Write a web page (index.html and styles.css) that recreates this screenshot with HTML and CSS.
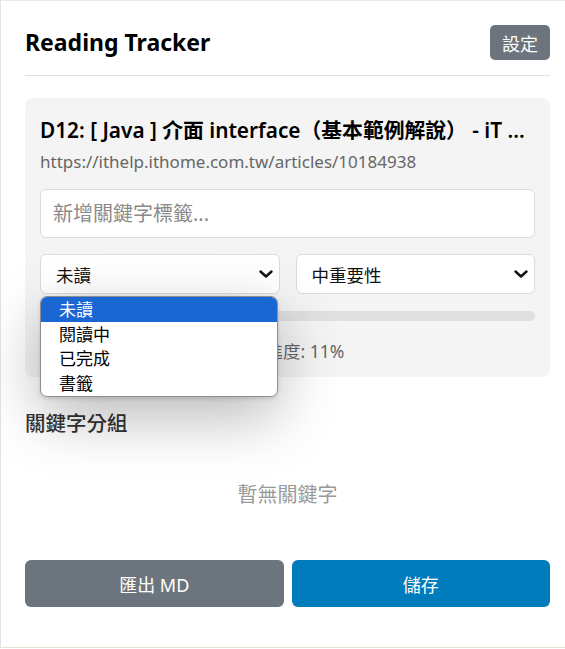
FILE: index.html
```html
<!DOCTYPE html>
<html lang="zh-Hant">
<head>
<meta charset="utf-8">
<title>Reading Tracker</title>
<link rel="stylesheet" href="styles.css">
</head>
<body>
<div class="app">
  <header class="header">
    <h1 class="app-title">Reading Tracker</h1>
    <button class="btn-settings">設定</button>
  </header>

  <section class="card">
    <div class="article-title">D12: [ Java ] 介面 interface（基本範例解說） - iT ...</div>
    <div class="article-url">https://ithelp.ithome.com.tw/articles/10184938</div>
    <input class="tag-input" type="text" placeholder="新增關鍵字標籤...">
    <div class="select-row">
      <div class="select-wrap">
        <div class="select">
          <span>未讀</span>
          <svg class="chev" width="14" height="8" viewBox="0 0 14 8"><path d="M1.5 1.5 L7 6.5 L12.5 1.5" fill="none" stroke="#111" stroke-width="2.4" stroke-linecap="round" stroke-linejoin="round"/></svg>
        </div>
        <ul class="listbox">
          <li class="option selected">未讀</li>
          <li class="option">閱讀中</li>
          <li class="option">已完成</li>
          <li class="option">書籤</li>
        </ul>
      </div>
      <div class="select">
        <span>中重要性</span>
        <svg class="chev" width="14" height="8" viewBox="0 0 14 8"><path d="M1.5 1.5 L7 6.5 L12.5 1.5" fill="none" stroke="#111" stroke-width="2.4" stroke-linecap="round" stroke-linejoin="round"/></svg>
      </div>
    </div>
    <div class="progress"><div class="progress-fill" style="width:11%"></div></div>
    <div class="progress-text">閱讀進度: 11%</div>
  </section>

  <h2 class="section-title">關鍵字分組</h2>
  <div class="empty">暫無關鍵字</div>

  <div class="actions">
    <button class="btn btn-gray">匯出 MD</button>
    <button class="btn btn-blue">儲存</button>
  </div>
</div>
</body>
</html>
```
FILE: styles.css
```css
* { box-sizing: border-box; }
html, body { margin: 0; padding: 0; background: #fff; }
body {
  font-family: "Noto Sans", "Noto Sans CJK TC", sans-serif;
  color: #111;
}
.app {
  height: 648px;
  border-top: 1px solid #ebe9df;
  border-left: 1px solid #e3e3e3;
  border-bottom: 1px solid #e6e3d5;
  padding: 24px 15px 0 24px;
}
.header {
  display: flex;
  align-items: center;
  justify-content: space-between;
  padding-bottom: 15px;
  border-bottom: 1px solid #e0e0e0;
}
.app-title {
  margin: 0;
  font-size: 23px;
  font-weight: 700;
  line-height: 35px;
  color: #000;
}
.btn-settings {
  width: 60px;
  height: 35px;
  border: none;
  border-radius: 5px;
  background: #6c757d;
  color: #fff;
  font-family: "Noto Sans CJK TC", sans-serif;
  font-size: 18px;
  padding: 0;
}
.card {
  margin-top: 22px;
  background: #f4f4f4;
  border-radius: 8px;
  padding: 18px 15px 14px;
}
.article-title {
  font-size: 20.8px;
  font-weight: 600;
  line-height: 29px;
  white-space: nowrap;
  color: #000;
}
.article-url {
  margin-top: 5px;
  font-size: 17px;
  line-height: 24px;
  color: #666;
}
.tag-input {
  display: block;
  width: 100%;
  height: 49px;
  margin-top: 15px;
  border: 1px solid #dcdcdc;
  border-radius: 6px;
  background: #fff;
  padding: 0 12px;
  font-family: "Noto Sans", "Noto Sans CJK TC", sans-serif;
  font-size: 20px;
  outline: none;
}
.tag-input::placeholder { color: #8a8a8a; }
.select-row {
  display: grid;
  grid-template-columns: 1fr 1fr;
  gap: 16px;
  margin-top: 16px;
}
.select-wrap { position: relative; }
.select {
  display: flex;
  align-items: center;
  justify-content: space-between;
  height: 40px;
  background: #fff;
  border: 1px solid #dcdcdc;
  border-radius: 6px;
  padding: 0 6px 0 15px;
  font-family: "Noto Sans CJK TC", sans-serif;
  font-size: 17.5px;
  color: #111;
}
.chev { display: block; }
.listbox {
  position: absolute;
  top: calc(100% + 2px);
  left: 0;
  width: 238px;
  margin: 0;
  padding: 0 0 1px;
  list-style: none;
  background: #fff;
  border: 1px solid #8e8e8e;
  border-radius: 7px;
  overflow: hidden;
  box-shadow: 0 20px 60px rgba(0, 0, 0, 0.28), 0 2px 4px rgba(0, 0, 0, 0.12);
  z-index: 10;
}
.option {
  height: 24.5px;
  line-height: 24.5px;
  padding-left: 18px;
  font-family: "Noto Sans CJK TC", sans-serif;
  font-size: 17px;
  color: #000;
}
.option.selected { background: #1a66d2; color: #fff; }
.progress {
  margin-top: 17px;
  height: 10px;
  border-radius: 5px;
  background: #e0e0e0;
  overflow: hidden;
}
.progress-fill { height: 100%; background: #4caf50; }
.progress-text {
  margin-top: 18px;
  text-align: center;
  font-size: 17.5px;
  line-height: 24px;
  color: #666;
}
.section-title {
  margin: 31px 0 0;
  font-family: "Noto Sans CJK TC", sans-serif;
  font-size: 20.5px;
  font-weight: 500;
  line-height: 28px;
  color: #333;
}
.empty {
  margin-top: 44px;
  text-align: center;
  font-family: "Noto Sans CJK TC", sans-serif;
  font-size: 20px;
  line-height: 28px;
  color: #999;
}
.actions {
  display: grid;
  grid-template-columns: 1fr 1fr;
  gap: 8px;
  margin-top: 52px;
}
.btn {
  height: 47px;
  border: none;
  border-radius: 6px;
  color: #fff;
  font-family: "Noto Sans", "Noto Sans CJK TC", sans-serif;
  font-size: 18px;
  font-weight: 400;
}
.btn-gray { background: #6c757d; }
.btn-blue { background: #007bbb; }
```
